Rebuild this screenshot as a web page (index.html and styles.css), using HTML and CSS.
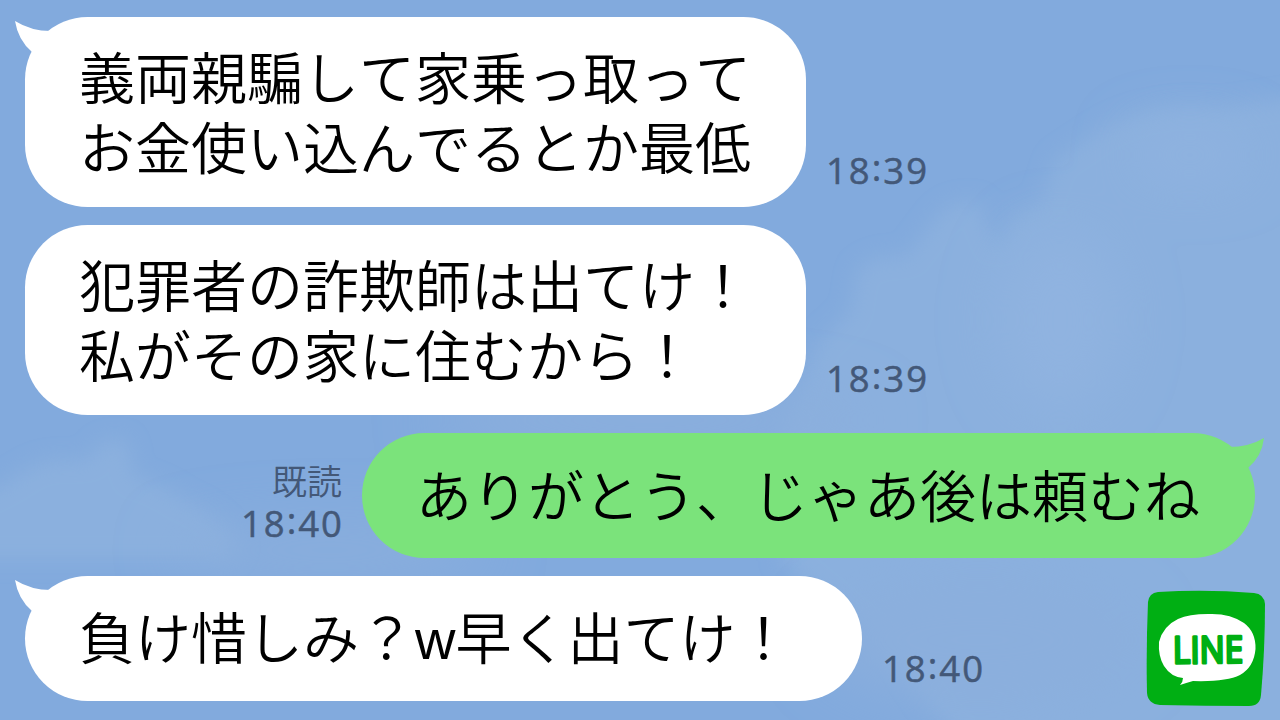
FILE: index.html
```html
<!DOCTYPE html>
<html lang="ja">
<head>
    <meta charset="UTF-8">
    <meta name="viewport" content="width=device-width, initial-scale=1.0">
    <title>トーク</title>
    <link rel="stylesheet" href="styles.css">
</head>
<body>

<svg class="sky" viewBox="0 0 1280 720" aria-hidden="true">
    <defs>
        <filter id="soft" x="-20%" y="-20%" width="140%" height="140%">
            <feGaussianBlur stdDeviation="10"/>
        </filter>
        <filter id="haze" x="-50%" y="-50%" width="200%" height="200%">
            <feGaussianBlur stdDeviation="28"/>
        </filter>
    </defs>
    <g fill="#8bb0de">
        <path filter="url(#soft)" d="M820 340 L850 312 L857 270 Q880 250 905 258 L930 225 Q950 195 980 203 Q990 235 998 248 L1015 213 L1040 205 L1055 160 L1100 130 Q1150 100 1220 108 L1340 90 V780 H1020 Q940 740 900 660 L780 560 V430 Z"/>
        <path filter="url(#soft)" d="M-30 500 L10 480 Q40 458 60 460 L88 460 Q100 435 125 440 Q135 460 131 475 Q160 482 185 500 Q215 510 240 545 L230 560 H-30 Z"/>
    </g>
    <g fill="#8bafdd" filter="url(#haze)">
        <ellipse cx="650" cy="420" rx="220" ry="35"/>
        <ellipse cx="330" cy="550" rx="160" ry="25"/>
        <ellipse cx="980" cy="640" rx="160" ry="60"/>
    </g>
    <g fill="#90b3e0" filter="url(#haze)">
        <ellipse cx="1190" cy="155" rx="60" ry="25"/>
        <ellipse cx="1060" cy="320" rx="60" ry="90"/>
    </g>
</svg>

<main class="talk">
    <div class="message">
        <div class="bubble">
            <svg class="tail" viewBox="0 0 40 40"><path d="M0 3 Q3 22 17 34 L36 13 Q16 13 0 3Z"/></svg>
            <p>義両親騙して家乗っ取って<br>お金使い込んでるとか最低</p>
        </div>
        <div class="meta"><time>18<span class="colon">:</span>39</time></div>
    </div>

    <div class="message">
        <div class="bubble">
            <p>犯罪者の詐欺師は出てけ！<br>私がその家に住むから！</p>
        </div>
        <div class="meta"><time>18<span class="colon">:</span>39</time></div>
    </div>

    <div class="message mine">
        <div class="bubble single">
            <svg class="tail" viewBox="0 0 40 40"><path d="M1 4 Q3 22 17 34 L36 13 Q16 13 1 4Z"/></svg>
            <p>ありがとう、じゃあ後は頼むね</p>
        </div>
        <div class="meta">
            <span class="read">既読</span>
            <time>18<span class="colon">:</span>40</time>
        </div>
    </div>

    <div class="message last">
        <div class="bubble single">
            <svg class="tail" viewBox="0 0 40 40"><path d="M0 3 Q3 22 17 34 L36 13 Q16 13 0 3Z"/></svg>
            <p>負け惜しみ？<span class="latin">w</span>早く出てけ！</p>
        </div>
        <div class="meta"><time>18<span class="colon">:</span>40</time></div>
    </div>
</main>

<svg class="logo" viewBox="0 0 120 118">
    <path fill="#00af13" d="M12 2 Q60 -1 108 3 Q118 4 119 14 Q119 60 115 105 Q114 116 103 116 Q60 116 14 115 Q2 114 1 103 Q0 60 2 12 Q3 3 12 2Z"/>
    <path fill="#fff" d="M62 24 Q84 23 98 33 Q110 42 109.500 59 Q108 77 94 85 Q80 92 47 91 Q40 93 34 95 Q37 92 37 88 Q25 87 18 76 Q12 66 13 52 Q17 36 32 29 Q43 24 62 24Z"/>
    <text class="logo-text" x="27" y="73" textLength="70" lengthAdjust="spacingAndGlyphs" transform="rotate(-.5 62 60)">LINE</text>
</svg>

</body>
</html>
```

FILE: styles.css
```css
* {
    box-sizing: border-box;
}
body {
    margin: 0;
    width: 1280px;
    height: 720px;
    overflow: hidden;
    background-color: #82aadd;
    font-family: "Noto Sans CJK JP", sans-serif;
}
.sky {
    position: absolute;
    top: 0;
    left: 0;
    width: 1280px;
    height: 720px;
    z-index: -1;
}
.talk {
    display: flex;
    flex-direction: column;
    gap: 18px;
    padding: 17px 25px;
}
.message {
    display: flex;
    align-items: flex-end;
    gap: 20px;
}
.message.mine {
    flex-direction: row-reverse;
}
.bubble {
    position: relative;
    padding: 23px 55px 27px 54px;
    border-radius: 62.5px;
    background-color: #fff;
}
.bubble.single {
    height: 125px;
    padding-top: 25px;
    padding-bottom: 30px;
}
.last .bubble.single {
    padding-top: 24px;
    padding-right: 70.5px;
}
.mine .bubble {
    background-color: #7be37b;
}
.bubble p {
    margin: 0;
    color: #000;
    font-size: 56px;
    font-weight: 350;
    font-kerning: none;
    text-spacing-trim: space-all;
    line-height: 70px;
    white-space: nowrap;
}
.latin {
    font-family: "Liberation Sans", sans-serif;
    line-height: 1;
}
.tail {
    position: absolute;
    top: 1px;
    left: -10px;
    width: 40px;
    height: 40px;
    fill: #fff;
}
.mine .tail {
    left: auto;
    right: -10px;
    transform: scaleX(-1);
    fill: #7be37b;
}
.meta {
    display: flex;
    flex-direction: column;
    align-items: flex-end;
    padding-bottom: 16px;
    color: #435878;
}
.meta time {
    font-family: "Open Sans", sans-serif;
    font-size: 36.5px;
    font-weight: 500;
    line-height: 42px;
    letter-spacing: 2px;
    -webkit-text-stroke: 0.5px #435878;
}
.mine .meta {
    padding-bottom: 14px;
}
.mine .meta time {
    margin-right: -2px;
}
.last .meta {
    padding-bottom: 12px;
}
.colon {
    vertical-align: 3px;
    line-height: 1;
}
.read {
    font-size: 35px;
    font-weight: 350;
    line-height: 42px;
    margin-bottom: 1px;
}
.logo {
    position: absolute;
    left: 1146px;
    top: 590px;
    width: 120px;
    height: 118px;
}
.logo-text {
    fill: #00af13;
    stroke: #00af13;
    stroke-width: 3;
    stroke-linejoin: round;
    font-family: "Open Sans", sans-serif;
    font-size: 37px;
    font-weight: 500;
}
```
